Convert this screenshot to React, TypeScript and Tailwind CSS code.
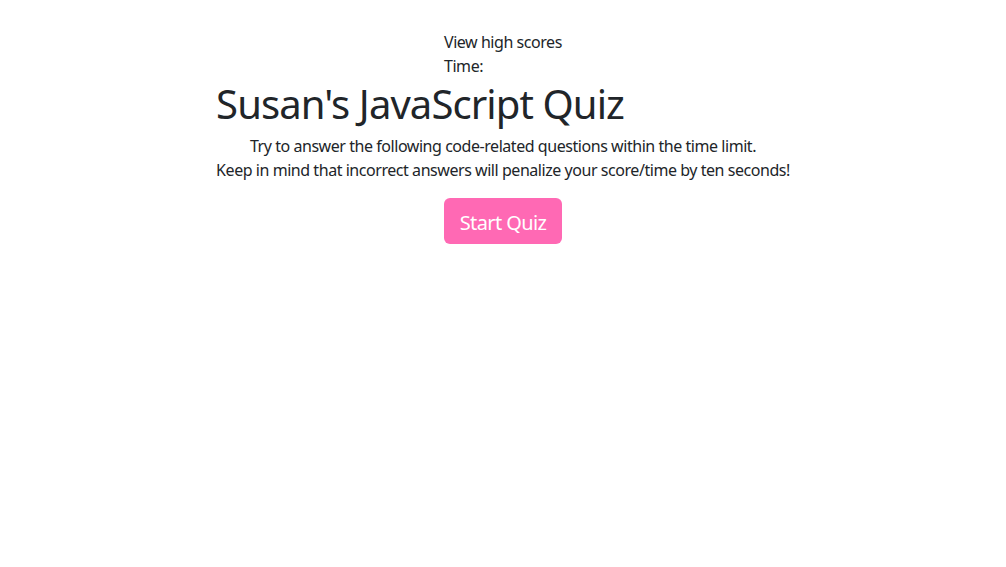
import React from "react";

function App() {
  return (
    <div className="min-h-screen bg-white text-[#212529] font-['Noto_Sans',sans-serif] text-base leading-6 tracking-[-0.45px]">
      {/* header */}
      <header className="pt-[30px] mx-auto w-[118px] whitespace-nowrap">
        <div>View high scores</div>
        <div>Time:</div>
      </header>

      <main className="flex justify-center">
        <div className="w-fit">
          <h1 className="text-[40px] leading-[48px] mt-[2px] mb-[6px] tracking-[-0.9px]">Susan's JavaScript Quiz</h1>
          <p className="text-center mb-4">
            Try to answer the following code-related questions within the time limit.
            <br />
            Keep in mind that incorrect answers will penalize your score/time by ten seconds!
          </p>
          <div className="flex justify-center">
            <button className="w-[118px] bg-[#ff69b4] text-white text-xl leading-[30px] pt-[10px] pb-[6px] rounded-md tracking-[-0.6px]">
              Start Quiz
            </button>
          </div>
        </div>
      </main>
    </div>
  );
}

export default App;
